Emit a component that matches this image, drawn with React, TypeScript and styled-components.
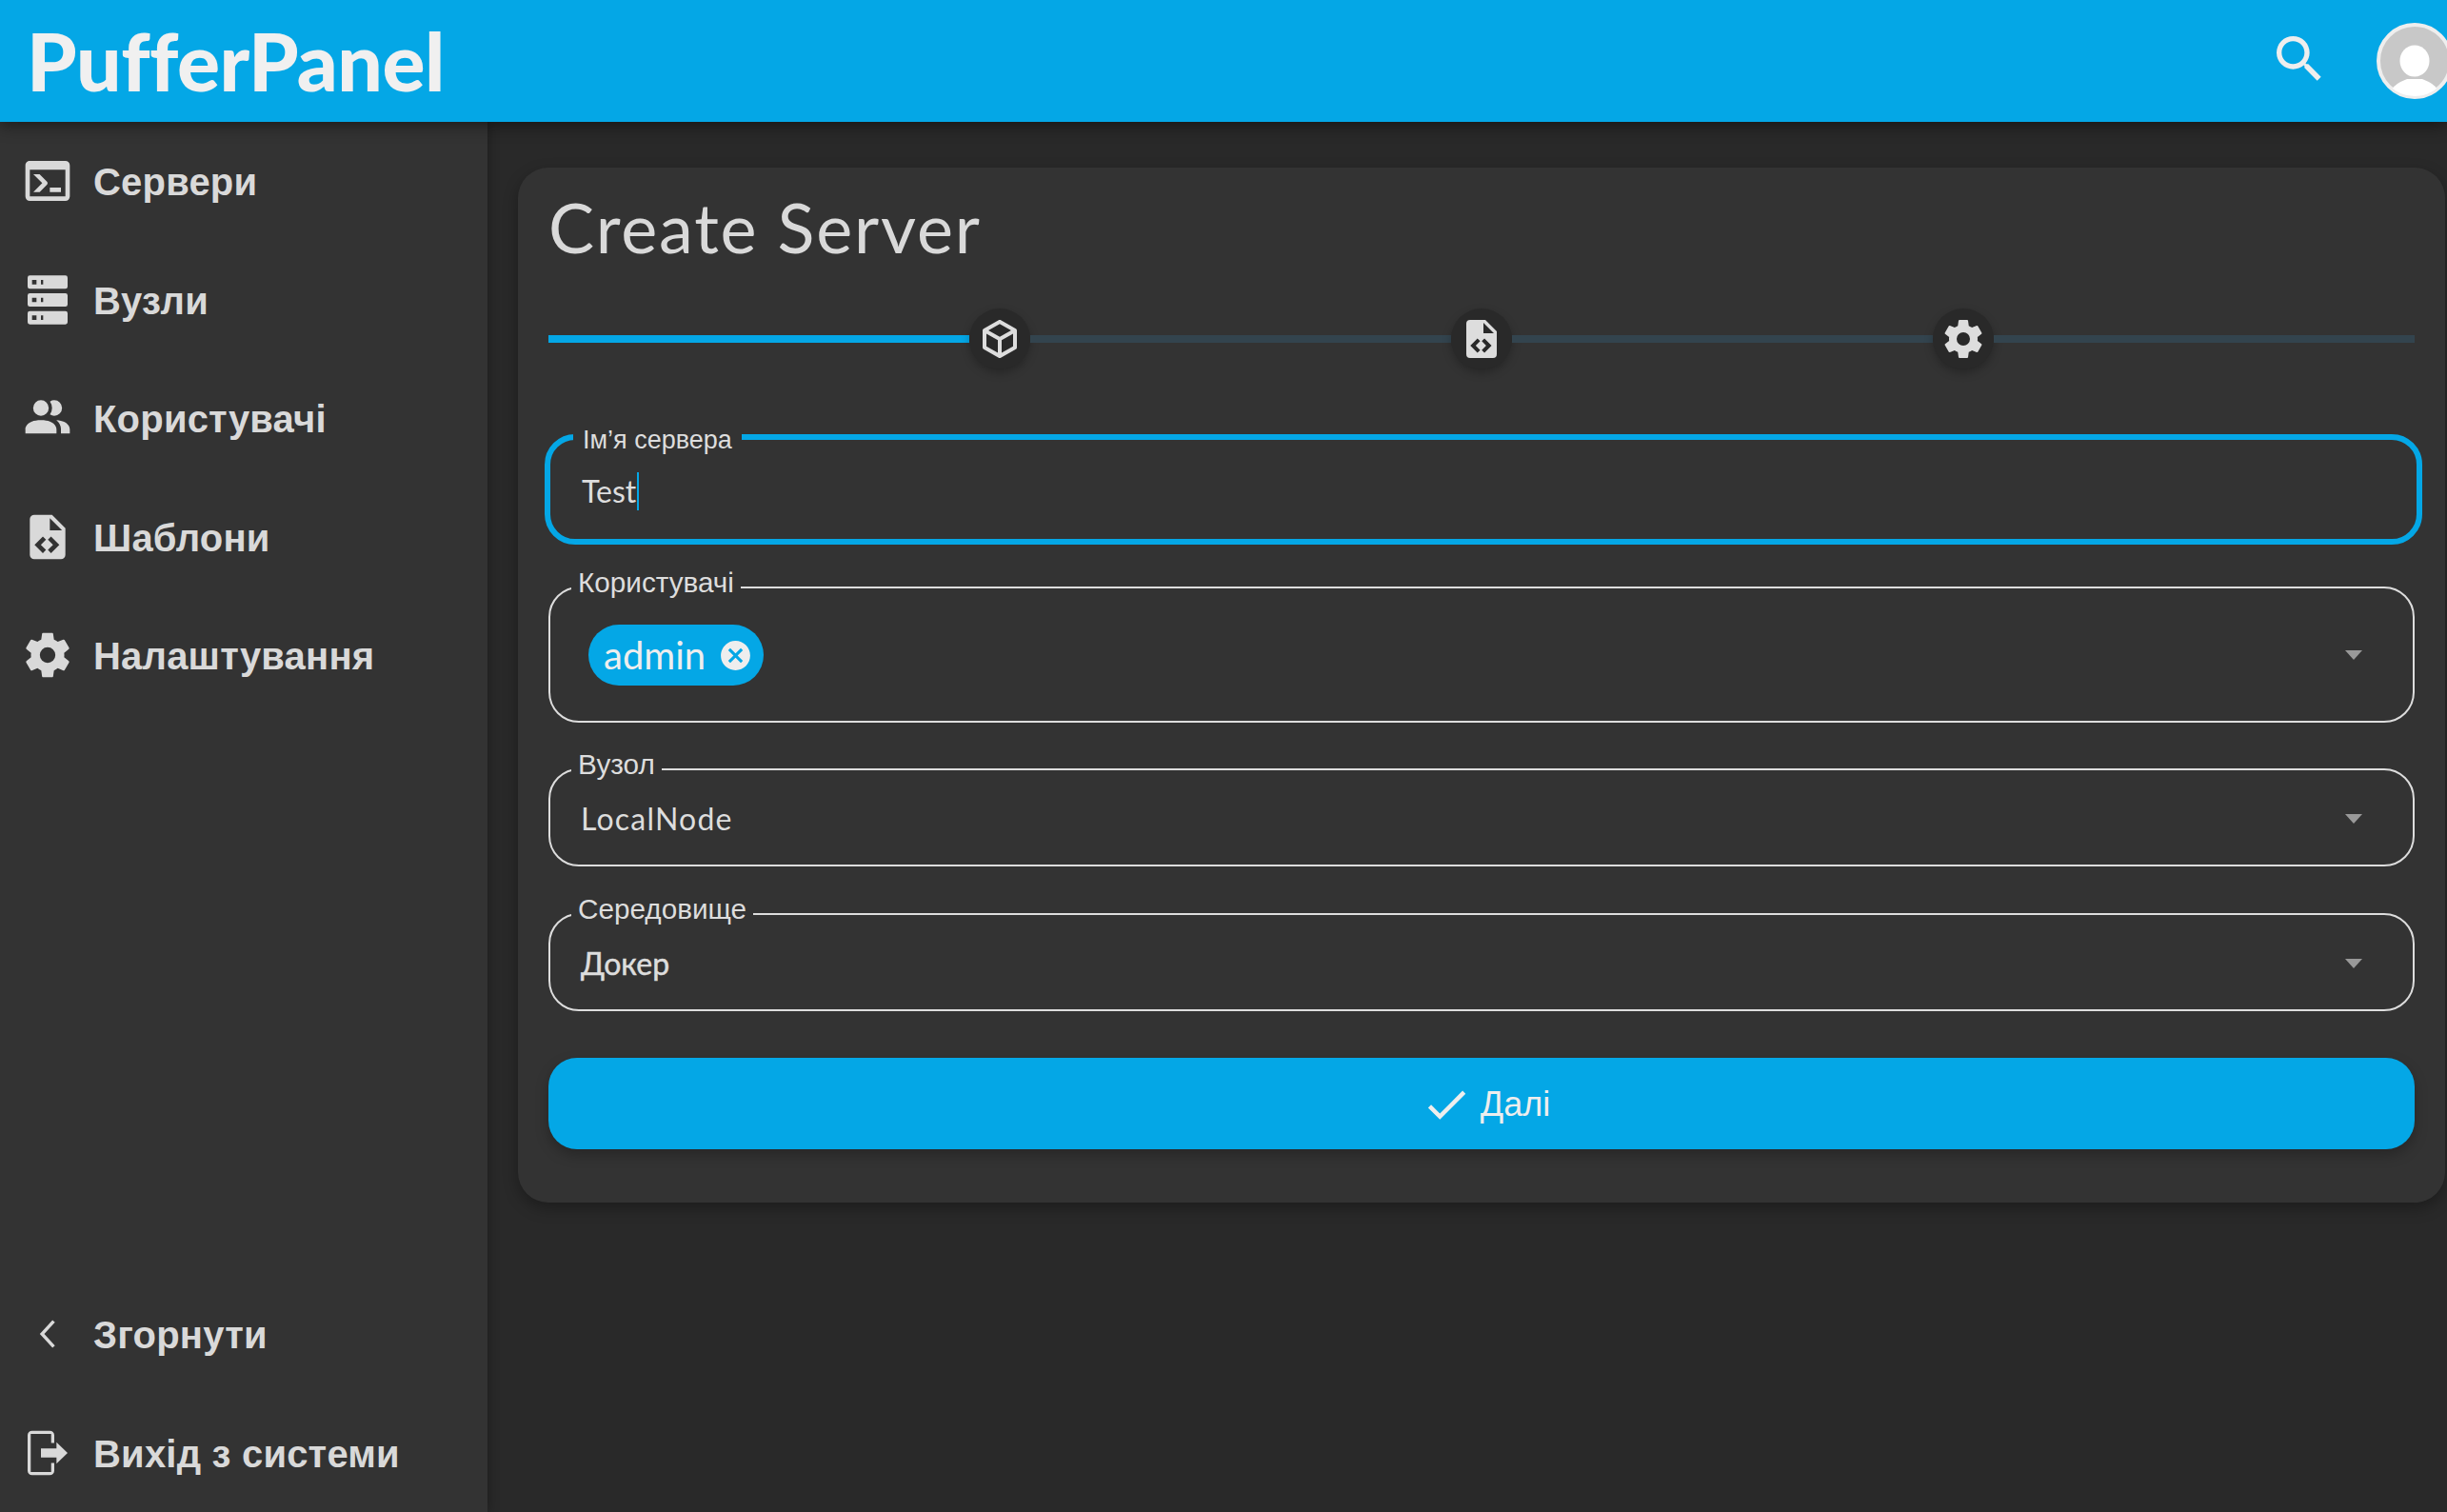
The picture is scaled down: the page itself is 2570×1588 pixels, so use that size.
import React from 'react';
import styled, { createGlobalStyle } from 'styled-components';

const BLUE = '#04a7e6';
const SANS = '"Liberation Sans", Arial, sans-serif';
const ROUND = 'Lato, "Liberation Sans", sans-serif';

const icons = {
  console:
    'M20,19V7H4V19H20M20,3A2,2 0 0,1 22,5V19A2,2 0 0,1 20,21H4A2,2 0 0,1 2,19V5C2,3.89 2.9,3 4,3H20M13,17V15H18V17H13M9.58,13L5.57,9H8.4L11.7,12.3C12.09,12.69 12.09,13.33 11.7,13.72L8.42,17H5.59L9.58,13Z',
  server:
    'M4,1H20A1,1 0 0,1 21,2V6A1,1 0 0,1 20,7H4A1,1 0 0,1 3,6V2A1,1 0 0,1 4,1M4,9H20A1,1 0 0,1 21,10V14A1,1 0 0,1 20,15H4A1,1 0 0,1 3,14V10A1,1 0 0,1 4,9M4,17H20A1,1 0 0,1 21,18V22A1,1 0 0,1 20,23H4A1,1 0 0,1 3,22V18A1,1 0 0,1 4,17M9,5H10V3H9V5M9,13H10V11H9V13M9,21H10V19H9V21M5,3V5H7V3H5M5,11V13H7V11H5M5,19V21H7V19H5Z',
  users:
    'M16 17V19H2V17S2 13 9 13 16 17 16 17M12.5 7.5A3.5 3.5 0 1 0 9 11A3.5 3.5 0 0 0 12.5 7.5M15.94 13A5.32 5.32 0 0 1 18 17V19H22V17S22 13.37 15.94 13M15 4A3.39 3.39 0 0 0 13.07 4.59A5 5 0 0 1 13.07 10.41A3.39 3.39 0 0 0 15 11A3.5 3.5 0 0 0 15 4Z',
  fileCode:
    'M14,2L20,8V20A2,2 0 0,1 18,22H6A2,2 0 0,1 4,20V4A2,2 0 0,1 6,2H14M13,9H18.5L13,3.5V9M6.12,15.5L9.86,19.24L11.28,17.83L8.95,15.5L11.28,13.17L9.86,11.76L6.12,15.5M17.28,15.5L13.54,11.76L12.12,13.17L14.45,15.5L12.12,17.83L13.54,19.24L17.28,15.5Z',
  cog:
    'M12,15.5A3.5,3.5 0 0,1 8.5,12A3.5,3.5 0 0,1 12,8.5A3.5,3.5 0 0,1 15.5,12A3.5,3.5 0 0,1 12,15.5M19.43,12.97C19.47,12.65 19.5,12.33 19.5,12C19.5,11.67 19.47,11.34 19.43,11L21.54,9.37C21.73,9.22 21.78,8.95 21.66,8.73L19.66,5.27C19.54,5.05 19.27,4.96 19.05,5.05L16.56,6.05C16.04,5.66 15.5,5.32 14.87,5.07L14.5,2.42C14.46,2.18 14.25,2 14,2H10C9.75,2 9.54,2.18 9.5,2.42L9.13,5.07C8.5,5.32 7.96,5.66 7.44,6.05L4.95,5.05C4.73,4.96 4.46,5.05 4.34,5.27L2.34,8.73C2.21,8.95 2.27,9.22 2.46,9.37L4.57,11C4.53,11.34 4.5,11.67 4.5,12C4.5,12.33 4.53,12.65 4.57,12.97L2.46,14.63C2.27,14.78 2.21,15.05 2.34,15.27L4.34,18.73C4.46,18.95 4.73,19.03 4.95,18.95L7.44,17.94C7.96,18.34 8.5,18.68 9.13,18.93L9.5,21.58C9.54,21.82 9.75,22 10,22H14C14.25,22 14.46,21.82 14.5,21.58L14.87,18.93C15.5,18.67 16.04,18.34 16.56,17.94L19.05,18.95C19.27,19.03 19.54,18.95 19.66,18.73L21.66,15.27C21.78,15.05 21.73,14.78 21.54,14.63L19.43,12.97Z',
  chevron: 'M15.3,6.8L14.2,5.8L8.5,12L14.2,18.2L15.3,17.2L10.5,12Z',
  logout:
    'M5 2h8a2 2 0 0 1 2 2v3.5h-1.4V3.4H4.4v17.2h9.2v-4.1H15V20a2 2 0 0 1-2 2H5a2 2 0 0 1-2-2V4a2 2 0 0 1 2-2zM9 10h7V7.2l5 4.8-5 4.8V14H9z',
  search:
    'M9.5,3A6.5,6.5 0 0,1 16,9.5C16,11.11 15.41,12.59 14.44,13.73L14.71,14H15.5L20.5,19L19,20.5L14,15.5V14.71L13.73,14.44C12.59,15.41 11.11,16 9.5,16A6.5,6.5 0 0,1 3,9.5A6.5,6.5 0 0,1 9.5,3M9.5,5C7,5 5,7 5,9.5C5,12 7,14 9.5,14C12,14 14,12 14,9.5C14,7 12,5 9.5,5Z',
  cube:
    'M21,16.5C21,16.88 20.79,17.21 20.47,17.38L12.57,21.82C12.41,21.94 12.21,22 12,22C11.79,22 11.59,21.94 11.43,21.82L3.53,17.38C3.21,17.21 3,16.88 3,16.5V7.5C3,7.12 3.21,6.79 3.53,6.62L11.43,2.18C11.59,2.06 11.79,2 12,2C12.21,2 12.41,2.06 12.57,2.18L20.47,6.62C20.79,6.79 21,7.12 21,7.5V16.5M12,4.15L6.04,7.5L12,10.85L17.96,7.5L12,4.15M5,15.91L11,19.29V12.58L5,9.21V15.91M19,15.91V9.21L13,12.58V19.29L19,15.91Z',
  closeCircle:
    'M12,2C17.53,2 22,6.47 22,12C22,17.53 17.53,22 12,22C6.47,22 2,17.53 2,12C2,6.47 6.47,2 12,2M15.59,7L12,10.59L8.41,7L7,8.41L10.59,12L7,15.59L8.41,17L12,13.41L15.59,17L17,15.59L13.41,12L17,8.41L15.59,7Z',
  check: 'M21,7L9,19L3.5,13.5L4.91,12.09L9,16.17L19.59,5.59L21,7Z',
};

const Icon = ({ d, size, color }: { d: string; size: number; color: string }) => (
  <IconSvg viewBox="0 0 24 24" $size={size}>
    <path d={d} fill={color} />
  </IconSvg>
);

const topNav = [
  { label: 'Сервери', icon: icons.console },
  { label: 'Вузли', icon: icons.server },
  { label: 'Користувачі', icon: icons.users },
  { label: 'Шаблони', icon: icons.fileCode },
  { label: 'Налаштування', icon: icons.cog },
];

const bottomNav = [
  { label: 'Згорнути', icon: icons.chevron },
  { label: 'Вихід з системи', icon: icons.logout },
];

const NavRow = ({ label, icon }: { label: string; icon: string }) => (
  <NavItem>
    <Icon d={icon} size={56} color="#d9d9d9" />
    <NavLabel>{label}</NavLabel>
  </NavItem>
);

const Arrow = () => (
  <ArrowSvg viewBox="0 0 18 10">
    <path d="M0 0H18L9 10Z" fill="#999" />
  </ArrowSvg>
);

const App = () => {
  return (
    <Page>
      <GlobalStyle />
      <Header>
        <Logo>PufferPanel</Logo>
        <HeaderRight>
          <SearchWrap>
            <Icon d={icons.search} size={64} color="#eeeeee" />
          </SearchWrap>
          <AvatarSvg viewBox="0 0 80 80">
            <clipPath id="avatar-clip">
              <circle cx="40" cy="40" r="37" />
            </clipPath>
            <circle cx="40" cy="40" r="38" fill="#c8c8c8" stroke="#eeeeee" strokeWidth="4" />
            <g clipPath="url(#avatar-clip)" fill="#ffffff">
              <ellipse cx="40" cy="40" rx="15.5" ry="16.5" />
              <path d="M16 70Q19 64 32 59H48Q61 64 64 70V80H16Z" />
            </g>
          </AvatarSvg>
        </HeaderRight>
      </Header>
      <Body>
        <Sidebar>
          <NavList>
            {topNav.map((item) => (
              <NavRow key={item.label} {...item} />
            ))}
          </NavList>
          <NavList>
            {bottomNav.map((item) => (
              <NavRow key={item.label} {...item} />
            ))}
          </NavList>
        </Sidebar>
        <Main>
          <Card>
            <Title>Create Server</Title>
            <Stepper>
              <StepLine $active />
              <StepDot>
                <Icon d={icons.cube} size={48} color="#dddddd" />
              </StepDot>
              <StepLine />
              <StepDot>
                <Icon d={icons.fileCode} size={48} color="#dddddd" />
              </StepDot>
              <StepLine />
              <StepDot>
                <Icon d={icons.cog} size={48} color="#dddddd" />
              </StepDot>
              <StepLine />
            </Stepper>

            <FocusedField>
              <FocusedLegend>Ім’я сервера</FocusedLegend>
              <FocusedBody>
                <Value>
                  Test
                  <Caret />
                </Value>
              </FocusedBody>
            </FocusedField>

            <Field $top={25}>
              <FieldLegend>Користувачі</FieldLegend>
              <UsersBody>
                <Chip>
                  <ChipText>admin</ChipText>
                  <Icon d={icons.closeCircle} size={37} color="#eeeeee" />
                </Chip>
                <Arrow />
              </UsersBody>
            </Field>

            <Field $top={29}>
              <FieldLegend>Вузол</FieldLegend>
              <SelectBody>
                <LatinValue>LocalNode</LatinValue>
                <Arrow />
              </SelectBody>
            </Field>

            <Field $top={30}>
              <FieldLegend>Середовище</FieldLegend>
              <SelectBody>
                <CyrillicValue>Докер</CyrillicValue>
                <Arrow />
              </SelectBody>
            </Field>

            <NextButton>
              <Icon d={icons.check} size={54} color="#eeeeee" />
              <span>Далі</span>
            </NextButton>
          </Card>
        </Main>
      </Body>
    </Page>
  );
};

export default App;

const GlobalStyle = createGlobalStyle`
  html, body {
    margin: 0;
    padding: 0;
    background: #292929;
    overflow: hidden;
  }
`;

const Page = styled.div`
  width: 2570px;
  height: 1588px;
  display: flex;
  flex-direction: column;
  overflow: hidden;
  background: #292929;
  font-family: ${SANS};
  color: #dddddd;
`;

const IconSvg = styled.svg<{ $size: number }>`
  width: ${(p) => p.$size}px;
  height: ${(p) => p.$size}px;
  flex-shrink: 0;
  display: block;
`;

const Header = styled.header`
  height: 128px;
  flex-shrink: 0;
  display: flex;
  align-items: center;
  justify-content: space-between;
  padding-left: 28px;
  background: ${BLUE};
  box-shadow: 0 4px 16px rgba(0, 0, 0, 0.45);
  position: relative;
  z-index: 2;
`;

const Logo = styled.div`
  font-family: ${ROUND};
  font-size: 84px;
  font-weight: 900;
  letter-spacing: -0.5px;
  line-height: 128px;
  color: #f0f0f0;
`;

const HeaderRight = styled.div`
  display: flex;
  align-items: center;
  gap: 49px;
  margin-right: -6px;
`;

const SearchWrap = styled.div`
  margin-bottom: 4px;
`;

const AvatarSvg = styled.svg`
  width: 80px;
  height: 80px;
  flex-shrink: 0;
  display: block;
`;

const Body = styled.div`
  flex: 1;
  display: flex;
  min-height: 0;
`;

const Sidebar = styled.nav`
  width: 512px;
  flex-shrink: 0;
  display: flex;
  flex-direction: column;
  justify-content: space-between;
  background: #333333;
  box-shadow: 2px 0 10px rgba(0, 0, 0, 0.25);
  position: relative;
  z-index: 1;
`;

const NavList = styled.div`
  display: flex;
  flex-direction: column;
`;

const NavItem = styled.div`
  height: 124.5px;
  display: flex;
  align-items: center;
  gap: 20px;
  padding-left: 22px;
`;

const NavLabel = styled.span`
  margin-top: 3px;
  font-size: 40px;
  font-weight: 700;
  letter-spacing: 0.2px;
  color: #d9d9d9;
`;

const Main = styled.main`
  flex: 1;
  padding: 48px 2px 0 32px;
  min-width: 0;
`;

const Card = styled.section`
  height: 1087px;
  box-sizing: border-box;
  padding: 22px 32px 0;
  background: #333333;
  border-radius: 32px;
  box-shadow: 0 6px 16px rgba(0, 0, 0, 0.3);
  display: flex;
  flex-direction: column;
`;

const Title = styled.h1`
  margin: 0;
  font-family: ${ROUND};
  font-size: 72px;
  font-weight: 400;
  letter-spacing: 1.8px;
  line-height: 80px;
  color: #d9d9d9;
`;

const Stepper = styled.div`
  margin-top: 46px;
  display: flex;
  align-items: center;
`;

const StepLine = styled.div<{ $active?: boolean }>`
  flex: 1;
  height: 8px;
  background: ${(p) => (p.$active ? BLUE : '#33444e')};
`;

const StepDot = styled.div`
  width: 64px;
  height: 64px;
  flex-shrink: 0;
  border-radius: 50%;
  background: #292929;
  box-shadow: 0 4px 10px rgba(0, 0, 0, 0.25);
  display: flex;
  align-items: center;
  justify-content: center;
`;

const Field = styled.fieldset<{ $top: number }>`
  box-sizing: border-box;
  margin: ${(p) => p.$top}px 0 0;
  padding: 0;
  min-width: 0;
  border: 2px solid #dddddd;
  border-radius: 32px;
`;

const FocusedField = styled.fieldset`
  box-sizing: border-box;
  margin: 53px -8px 0 -4px;
  padding: 0;
  min-width: 0;
  border: 6px solid ${BLUE};
  border-radius: 32px;
`;

const FieldLegend = styled.legend`
  margin-left: 22px;
  padding: 0 7px 10px;
  font-size: 29.7px;
  line-height: 30px;
  color: #dddddd;
`;

const FocusedLegend = styled.legend`
  margin-left: 24px;
  padding: 6px 10px 0;
  font-size: 27px;
  line-height: 30px;
  color: #dddddd;
`;

const FieldBody = styled.div`
  box-sizing: border-box;
  display: flex;
  align-items: center;
  justify-content: space-between;
  padding-right: 53px;
`;

const FocusedBody = styled(FieldBody)`
  height: 89px;
  padding-left: 33px;
  padding-bottom: 12px;
`;

const UsersBody = styled(FieldBody)`
  height: 120px;
  padding-left: 40px;
  padding-bottom: 18px;
`;

const SelectBody = styled(FieldBody)`
  height: 80px;
  padding-left: 32px;
  padding-bottom: 16px;
`;

const Value = styled.div`
  font-family: ${ROUND};
  font-size: 32px;
  font-weight: 400;
  line-height: 40px;
  color: #dddddd;
  display: flex;
  align-items: center;
`;

const LatinValue = styled(Value)`
  letter-spacing: 1.2px;
`;

const CyrillicValue = styled(Value)`
  -webkit-text-stroke: 0.5px #dddddd;
`;

const Caret = styled.span`
  width: 2px;
  height: 40px;
  margin-left: 1px;
  background: ${BLUE};
`;

const Chip = styled.div`
  height: 64px;
  box-sizing: border-box;
  padding: 0 11px 0 16px;
  display: flex;
  align-items: center;
  gap: 13px;
  border-radius: 32px;
  background: ${BLUE};
`;

const ChipText = styled.span`
  font-family: ${ROUND};
  font-size: 40px;
  color: #eeeeee;
`;

const ArrowSvg = styled.svg`
  width: 18px;
  height: 10px;
  flex-shrink: 0;
  display: block;
`;

const NextButton = styled.button`
  height: 96px;
  margin-top: 49px;
  padding: 2px 0 0 8px;
  flex-shrink: 0;
  display: flex;
  align-items: center;
  justify-content: center;
  gap: 9px;
  border: none;
  border-radius: 30px;
  background: ${BLUE};
  color: #eeeeee;
  font-family: ${SANS};
  font-size: 36px;
  box-shadow: 0 6px 14px rgba(0, 0, 0, 0.25);
`;
